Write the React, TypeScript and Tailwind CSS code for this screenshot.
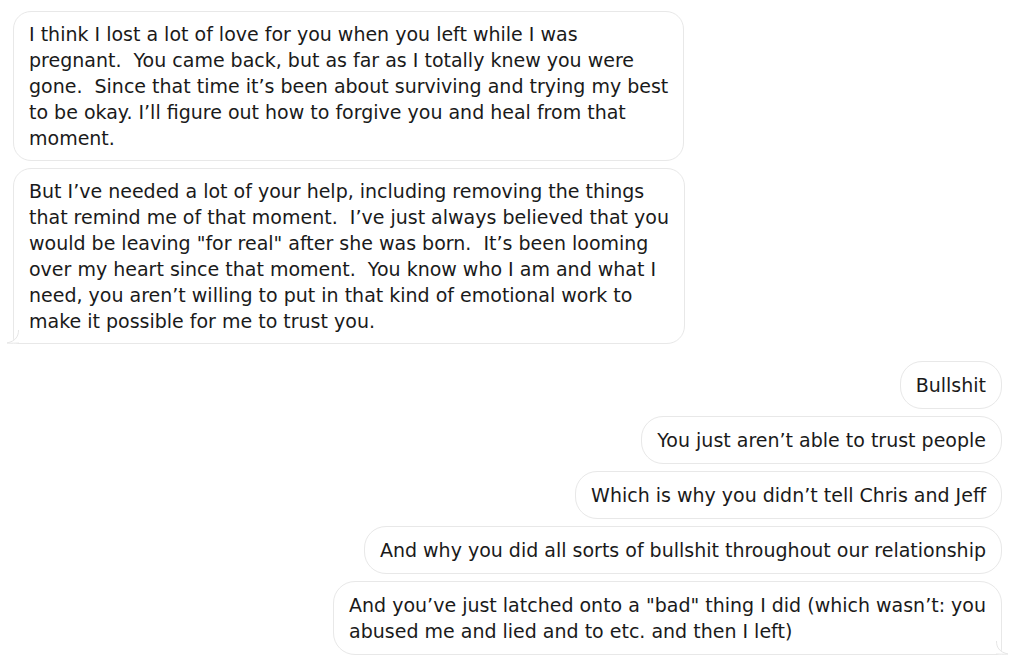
import React from 'react';

type Msg = { text: string; mine?: boolean; tail?: boolean };

const messages: Msg[] = [
  {
    text:
      'I think I lost a lot of love for you when you left while I was\npregnant.  You came back, but as far as I totally knew you were\ngone.  Since that time it’s been about surviving and trying my best\nto be okay. I’ll figure out how to forgive you and heal from that\nmoment.',
  },
  {
    text:
      'But I’ve needed a lot of your help, including removing the things\nthat remind me of that moment.  I’ve just always believed that you\nwould be leaving "for real" after she was born.  It’s been looming\nover my heart since that moment.  You know who I am and what I\nneed, you aren’t willing to put in that kind of emotional work to\nmake it possible for me to trust you.',
    tail: true,
  },
  { text: 'Bullshit', mine: true },
  { text: 'You just aren’t able to trust people', mine: true },
  { text: 'Which is why you didn’t tell Chris and Jeff', mine: true },
  { text: 'And why you did all sorts of bullshit throughout our relationship', mine: true },
  {
    text:
      'And you’ve just latched onto a "bad" thing I did (which wasn’t: you\nabused me and lied and to etc. and then I left)',
    mine: true,
    tail: true,
  },
];

function Tail({ mine }: { mine?: boolean }) {
  // little hook at the bottom corner of the last bubble in a group
  if (mine) {
    return (
      <svg
        className="absolute -right-[9px] -bottom-[1px]"
        width="14"
        height="14"
        viewBox="0 0 14 14"
        fill="none"
      >
        <path d="M0 0 C0 6 3 11 12 13 C8 13.5 3 13 0 13" fill="white" />
        <path d="M0.5 0 C0.5 6 3 11 12 13 C8 13.5 3 13 -2 13" stroke="#e6e6e6" strokeWidth="1" fill="none" />
      </svg>
    );
  }
  return (
    <svg
      className="absolute -left-[9px] -bottom-[1px]"
      width="14"
      height="14"
      viewBox="0 0 14 14"
      fill="none"
    >
      <path d="M14 0 C14 6 11 11 2 13 C6 13.5 11 13 14 13" fill="white" />
      <path d="M13.5 0 C13.5 6 11 11 2 13 C6 13.5 11 13 16 13" stroke="#e6e6e6" strokeWidth="1" fill="none" />
    </svg>
  );
}

function Bubble({ msg }: { msg: Msg }) {
  return (
    <div
      className={
        'relative whitespace-pre border border-[#e8e8e8] bg-white px-[15px] text-[19px] leading-[26px] text-[#1a1a1a] ' +
        (msg.mine ? 'self-end rounded-[22px] py-[10px] ' : 'self-start rounded-[18px] py-[9px] ') +
        (msg.tail && msg.mine ? 'rounded-br-[6px] ' : '') +
        (msg.tail && !msg.mine ? 'rounded-bl-[6px] ' : '')
      }
    >
      {msg.text}
      {msg.tail && <Tail mine={msg.mine} />}
    </div>
  );
}

export default function App() {
  const theirs = messages.filter((m) => !m.mine);
  const mine = messages.filter((m) => m.mine);
  return (
    <div
      className="flex h-[666px] w-[1024px] flex-col overflow-hidden bg-white pt-[11px] pr-[22px] pl-[13px]"
      style={{ fontFamily: '"DejaVu Sans", "Liberation Sans", sans-serif' }}
    >
      <div className="flex flex-col gap-[7px]">
        {theirs.map((m, i) => (
          <Bubble key={i} msg={m} />
        ))}
      </div>
      <div className="mt-[17px] flex flex-col gap-[7px]">
        {mine.map((m, i) => (
          <Bubble key={i} msg={m} />
        ))}
      </div>
    </div>
  );
}
